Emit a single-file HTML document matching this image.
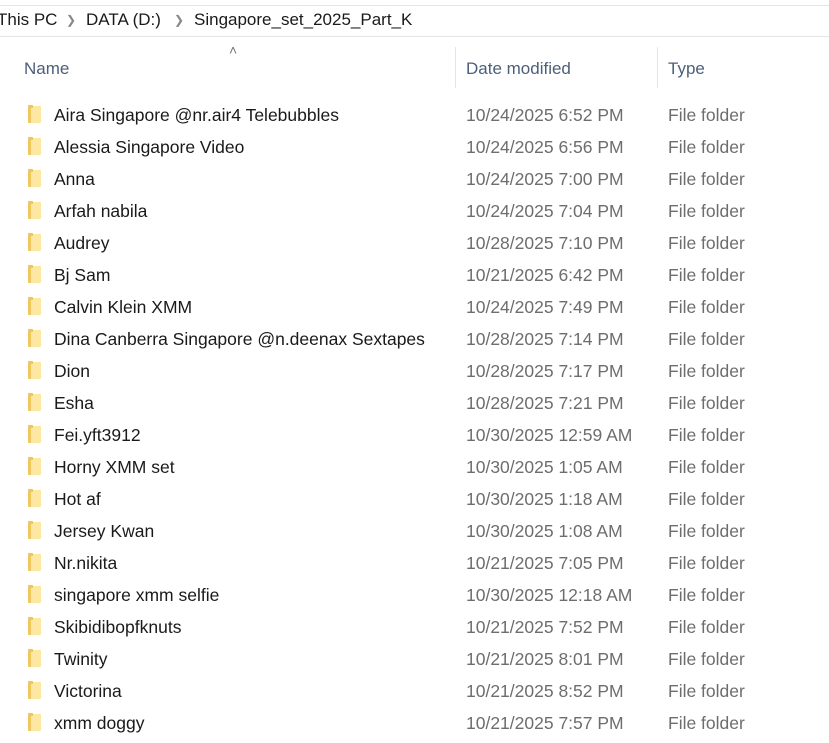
<!DOCTYPE html>
<html><head><meta charset="utf-8"><style>
body{margin:0;width:829px;height:743px;background:#fff;overflow:hidden;font-family:"Segoe UI","Liberation Sans",sans-serif;position:relative}
.bar{position:absolute;left:0;top:5px;width:829px;height:30px;border-top:1px solid #e5e5e5;border-bottom:1px solid #e5e5e5}
.crumb{position:absolute;top:10px;font-size:17px;color:#1a1a1a;white-space:nowrap}
.sep{position:absolute;top:13px;font-size:12px;color:#888}
.hd{position:absolute;top:59px;font-size:17px;color:#4c607a}
.vl{position:absolute;top:47px;width:1px;height:41px;background:#e5e5e5}
.row{position:absolute;left:0;width:829px;height:32px;font-size:17.5px}
.row .n{position:absolute;left:54px;top:6px;color:#1a1a1a;white-space:nowrap}
.row .d{position:absolute;left:466px;top:6px;color:#6d6d6d}
.row .t{position:absolute;left:668px;top:6px;color:#6d6d6d}
.ic{position:absolute;left:28px;top:7px;width:13px;height:17px;background:linear-gradient(90deg,#efc75e 0 3px,#fce7a3 3px);border-radius:1px}
.ic:before{content:"";position:absolute;left:0;top:-1px;width:5px;height:3px;background:#efc75e}
</style></head><body>
<div class="bar"></div>
<div class="crumb" style="left:-3px">This PC</div>
<div class="sep" style="left:66px">&#x276F;</div>
<div class="crumb" style="left:86px">DATA (D:)</div>
<div class="sep" style="left:174px">&#x276F;</div>
<div class="crumb" style="left:194px">Singapore_set_2025_Part_K</div>
<div style="position:absolute;left:229px;top:42px;font-size:14px;color:#777">&#x2C4;</div>
<div class="hd" style="left:24px">Name</div>
<div class="vl" style="left:455px"></div>
<div class="hd" style="left:466px">Date modified</div>
<div class="vl" style="left:657px"></div>
<div class="hd" style="left:668px">Type</div>
<div class="row" style="top:99px"><i class="ic"></i><span class="n">Aira Singapore @nr.air4 Telebubbles</span><span class="d">10/24/2025 6:52 PM</span><span class="t">File folder</span></div>
<div class="row" style="top:131px"><i class="ic"></i><span class="n">Alessia Singapore Video</span><span class="d">10/24/2025 6:56 PM</span><span class="t">File folder</span></div>
<div class="row" style="top:163px"><i class="ic"></i><span class="n">Anna</span><span class="d">10/24/2025 7:00 PM</span><span class="t">File folder</span></div>
<div class="row" style="top:195px"><i class="ic"></i><span class="n">Arfah nabila</span><span class="d">10/24/2025 7:04 PM</span><span class="t">File folder</span></div>
<div class="row" style="top:227px"><i class="ic"></i><span class="n">Audrey</span><span class="d">10/28/2025 7:10 PM</span><span class="t">File folder</span></div>
<div class="row" style="top:259px"><i class="ic"></i><span class="n">Bj Sam</span><span class="d">10/21/2025 6:42 PM</span><span class="t">File folder</span></div>
<div class="row" style="top:291px"><i class="ic"></i><span class="n">Calvin Klein XMM</span><span class="d">10/24/2025 7:49 PM</span><span class="t">File folder</span></div>
<div class="row" style="top:323px"><i class="ic"></i><span class="n">Dina Canberra Singapore @n.deenax Sextapes</span><span class="d">10/28/2025 7:14 PM</span><span class="t">File folder</span></div>
<div class="row" style="top:355px"><i class="ic"></i><span class="n">Dion</span><span class="d">10/28/2025 7:17 PM</span><span class="t">File folder</span></div>
<div class="row" style="top:387px"><i class="ic"></i><span class="n">Esha</span><span class="d">10/28/2025 7:21 PM</span><span class="t">File folder</span></div>
<div class="row" style="top:419px"><i class="ic"></i><span class="n">Fei.yft3912</span><span class="d">10/30/2025 12:59 AM</span><span class="t">File folder</span></div>
<div class="row" style="top:451px"><i class="ic"></i><span class="n">Horny XMM set</span><span class="d">10/30/2025 1:05 AM</span><span class="t">File folder</span></div>
<div class="row" style="top:483px"><i class="ic"></i><span class="n">Hot af</span><span class="d">10/30/2025 1:18 AM</span><span class="t">File folder</span></div>
<div class="row" style="top:515px"><i class="ic"></i><span class="n">Jersey Kwan</span><span class="d">10/30/2025 1:08 AM</span><span class="t">File folder</span></div>
<div class="row" style="top:547px"><i class="ic"></i><span class="n">Nr.nikita</span><span class="d">10/21/2025 7:05 PM</span><span class="t">File folder</span></div>
<div class="row" style="top:579px"><i class="ic"></i><span class="n">singapore xmm selfie</span><span class="d">10/30/2025 12:18 AM</span><span class="t">File folder</span></div>
<div class="row" style="top:611px"><i class="ic"></i><span class="n">Skibidibopfknuts</span><span class="d">10/21/2025 7:52 PM</span><span class="t">File folder</span></div>
<div class="row" style="top:643px"><i class="ic"></i><span class="n">Twinity</span><span class="d">10/21/2025 8:01 PM</span><span class="t">File folder</span></div>
<div class="row" style="top:675px"><i class="ic"></i><span class="n">Victorina</span><span class="d">10/21/2025 8:52 PM</span><span class="t">File folder</span></div>
<div class="row" style="top:707px"><i class="ic"></i><span class="n">xmm doggy</span><span class="d">10/21/2025 7:57 PM</span><span class="t">File folder</span></div>
</body></html>
